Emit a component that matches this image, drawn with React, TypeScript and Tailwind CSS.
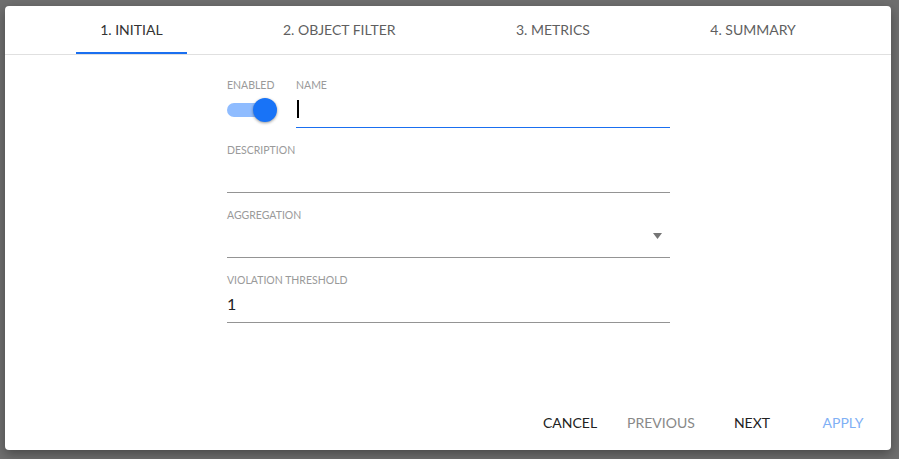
import { useState } from 'react'

const tabs = ['1. INITIAL', '2. OBJECT FILTER', '3. METRICS', '4. SUMMARY']

function Field({ label, children, className = '' }: { label: string; children?: React.ReactNode; className?: string }) {
  return (
    <div className={className}>
      <div className="text-[10.5px] leading-[12px] text-[#9a9a9a]">{label}</div>
      <div className="h-[37px] border-b border-[#949494] flex items-center relative">{children}</div>
    </div>
  )
}

export default function App() {
  const [enabled] = useState(true)
  const active = 0

  return (
    <div className="h-[459px] w-[899px] bg-[#6f6f6f] pt-[6px] pl-[5px] pr-[8px] pb-[9px] font-['Lato','Liberation_Sans',sans-serif]">
      <div className="h-full bg-white rounded-[4px] shadow-[0_4px_12px_rgba(0,0,0,0.35)] flex flex-col">
        <div className="h-[49px] border-b border-[#e0e0e0] flex px-[35px]">
          {tabs.map((t, i) => (
            <div key={t} className="flex-auto flex justify-center">
              <div
                className={
                  'px-6 flex items-center text-[14px] pt-[1px] border-b-2 ' +
                  (i === active ? 'border-[#1a6ff0] text-[#333]' : 'border-transparent text-[#5f5f5f]')
                }
              >
                {t}
              </div>
            </div>
          ))}
        </div>

        <div className="flex-1 pl-[222px] pt-[24px]">
          <div className="w-[443px]">
            <div className="flex">
              <div className="w-[69px] shrink-0">
                <div className="text-[10.5px] leading-[12px] text-[#9a9a9a]">ENABLED</div>
                <div className="h-[37px] flex items-center pt-[1px]">
                  <div className="relative w-[50px] h-[24px] flex items-center">
                    <div className={'w-[40px] h-[14px] rounded-full ' + (enabled ? 'bg-[#8fbcff]' : 'bg-[#bdbdbd]')} />
                    <div className="absolute left-[26px] top-0 w-[24px] h-[24px] rounded-full bg-[#1873f7] shadow-[0_1px_3px_rgba(0,0,0,0.4)]" />
                  </div>
                </div>
              </div>
              <div className="flex-1">
                <div className="text-[10.5px] leading-[12px] text-[#9a9a9a]">NAME</div>
                <div className="h-[37px] border-b border-[#1a6ff0] flex items-center">
                  <div className="w-[2px] h-[18px] bg-black ml-[1px]" />
                </div>
              </div>
            </div>

            <Field label="DESCRIPTION" className="mt-4" />
            <Field label="AGGREGATION" className="mt-4">
              <svg className="absolute right-[8px] top-[12px]" width="9" height="6" viewBox="0 0 9 6">
                <path d="M0 0h9L4.5 6z" fill="#757575" />
              </svg>
            </Field>
            <Field label="VIOLATION THRESHOLD" className="mt-4">
              <span className="text-[16px] text-[#222]">1</span>
            </Field>
          </div>
        </div>

        <div className="flex justify-end gap-[3px] pr-[4px] pb-[10px]">
          <button className="w-[88px] h-[36px] text-[14px] text-[#222]">CANCEL</button>
          <button className="w-[88px] h-[36px] text-[14px] text-[#888]">PREVIOUS</button>
          <button className="w-[88px] h-[36px] text-[14px] text-[#222]">NEXT</button>
          <button className="w-[88px] h-[36px] text-[14px] text-[#7fb0f5]">APPLY</button>
        </div>
      </div>
    </div>
  )
}
